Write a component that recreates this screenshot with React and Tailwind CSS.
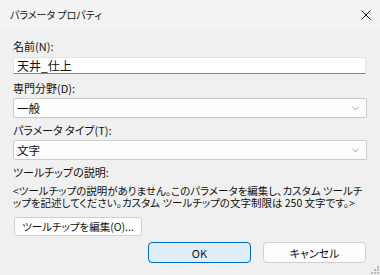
import { ChevronDown } from 'lucide-react';

const font = "font-['Yu_Gothic_UI','Noto_Sans_CJK_JP',sans-serif] [font-feature-settings:'palt']";

const Combo = ({ value }) => (
  <div className="flex h-[20px] items-center justify-between rounded-[2px] border border-[#cccccc] bg-[#fdfdfd] pl-[3px] pr-[5px]">
    <span className="text-[11.5px]">{value}</span>
    <ChevronDown size={11} strokeWidth={1.3} className="text-[#606060]" />
  </div>
);

const Grip = () => (
  <svg width="8" height="8" viewBox="0 0 8 8" className="absolute bottom-[1px] right-[1px]">
    {[[6, 0], [3, 3], [6, 3], [0, 6], [3, 6], [6, 6]].map(([x, y], i) => (
      <rect key={i} x={x} y={y} width="2" height="2" fill="#b9b9b9" />
    ))}
  </svg>
);

export default function App() {
  return (
    <div className={`relative flex h-[275px] w-[380px] flex-col overflow-hidden bg-[#f0f0f0] text-[11px] leading-[16px] text-[#111111] ${font}`}>
      {/* title bar */}
      <div className="flex h-[29px] shrink-0 items-center justify-between bg-[#f3f3f3] pl-[10px] pr-[9px] text-[10px]">
        <span className="pt-[1px]">パラメータ プロパティ</span>
        <svg width="10" height="10" viewBox="0 0 10 10" className="mt-[1px]">
          <path d="M0.5 0.5 L9.5 9.5 M9.5 0.5 L0.5 9.5" stroke="#1b1b1b" strokeWidth="1" fill="none" />
        </svg>
      </div>

      <div className="flex flex-col px-[13px] pt-[9px]">
        <label>名前(N):</label>
        <div className="mt-[3px] mr-[1px] flex h-[17px] items-center border border-b-[#868686] border-[#e3e3e3] bg-white pl-[3px] text-[12px]">
          天井_仕上
        </div>

        <label className="mt-[6px]">専門分野(D):</label>
        <div className="mt-[2px]">
          <Combo value="一般" />
        </div>

        <label className="mt-[4px]">パラメータ タイプ(T):</label>
        <div className="mt-[2px]">
          <Combo value="文字" />
        </div>

        <label className="mt-[4px]">ツールチップの説明:</label>
        <p className="mt-[5px] whitespace-nowrap text-[10.5px] leading-[12px]">
          &lt;ツールチップの説明がありません。このパラメータを編集し、カスタム ツールチ
          <br />
          ップを記述してください。カスタム ツールチップの文字制限は 250 文字です。&gt;
        </p>

        <div className="mt-[8px] flex">
          <button className="ml-[1px] flex h-[19px] w-[128px] items-center justify-center whitespace-nowrap rounded-[3px] border border-[#d0d0d0] bg-[#fdfdfd] text-[10.5px]">
            ツールチップを編集(O)...
          </button>
        </div>

        <div className="mt-[6px] flex justify-end gap-[12px] pr-[1px]">
          <button className="flex h-[21px] w-[103px] items-center justify-center rounded-[4px] border border-[#0067c0] bg-[#e0eef9]">
            OK
          </button>
          <button className="flex h-[21px] w-[103px] items-center justify-center rounded-[4px] border border-[#d0d0d0] bg-[#fdfdfd]">
            キャンセル
          </button>
        </div>
      </div>
      <Grip />
    </div>
  );
}
